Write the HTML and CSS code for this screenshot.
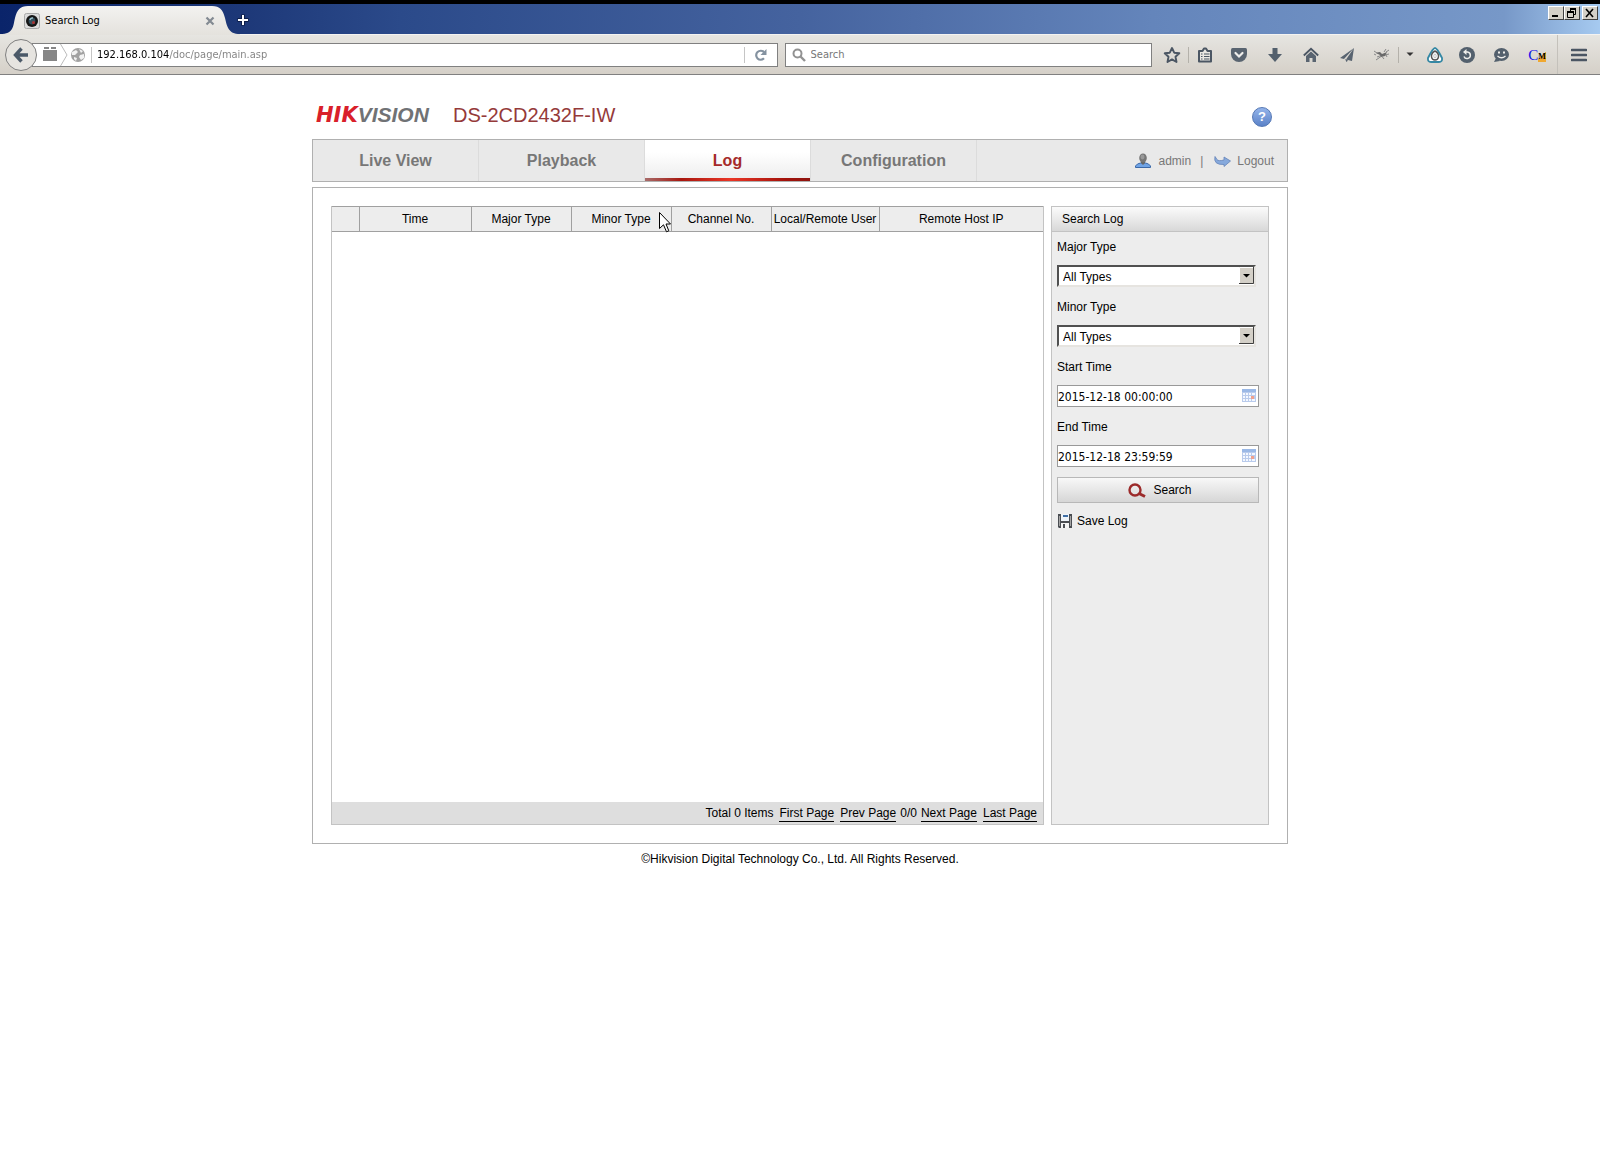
FILE: index.html
```html
<!DOCTYPE html>
<html lang="en">
<head>
<meta charset="utf-8">
<title>Search Log</title>
<link rel="stylesheet" href="styles.css">
</head>
<body>
<div class="browser">
  <div class="titlebar">
    <div class="tab">
      <svg class="tab-shape" width="242" height="29" viewBox="0 0 242 29" aria-hidden="true">
        <defs><linearGradient id="tabFill" x1="0" y1="0" x2="0" y2="1"><stop offset="0" stop-color="#f3f2f0"/><stop offset="1" stop-color="#e4e2dd"/></linearGradient></defs>
        <path d="M0 28C14 28 13 20 15 12C17 4 20 0 28 0H212C220 0 223 4 225 12C227 20 228 28 240 28V29H0Z" fill="url(#tabFill)"/>
      </svg>
      <svg class="favicon" width="16" height="16" viewBox="0 0 16 16" aria-hidden="true">
        <rect x=".5" y=".5" width="15" height="15" rx="2" fill="#dcdcdc" stroke="#a9a9a9"/>
        <circle cx="8" cy="8" r="6" fill="#151515"/><circle cx="8" cy="8" r="3.4" fill="#34505e"/><path d="M6 7a2.500 2.500 0 0 1 3-2" stroke="#9fc3cc" stroke-width="1.500" fill="none"/><circle cx="9.500" cy="9.500" r="1.500" fill="#a33"/>
      </svg>
      <span class="tab-title">Search Log</span>
      <button class="tab-close" aria-label="Close tab"><svg width="10" height="10" viewBox="0 0 10 10"><path d="M1.500 1.500L8.500 8.500M8.500 1.500L1.500 8.500" stroke="#838a92" stroke-width="2.200"/></svg></button>
    </div>
    <button class="new-tab" aria-label="New tab"><svg width="12" height="12" viewBox="0 0 12 12"><path d="M6 .5V11.500M.5 6H11.500" stroke="#0d1d48" stroke-width="4"/><path d="M6 1V11M1 6H11" stroke="#fff" stroke-width="2"/></svg></button>
    <div class="window-buttons">
      <button class="win" aria-label="Minimize"><svg width="12" height="10" viewBox="0 0 12 10"><path d="M2 8H8" stroke="#000" stroke-width="2"/></svg></button>
      <button class="win" aria-label="Restore"><svg width="12" height="10" viewBox="0 0 12 10"><path d="M4 1H10M1 4H8" stroke="#000" stroke-width="2"/><path d="M4.500 1V4M9.500 1V6.500H8M1.500 4V9.500H7.500V4" stroke="#000" fill="none"/></svg></button>
      <button class="win win-close" aria-label="Close"><svg width="12" height="10" viewBox="0 0 12 10"><path d="M2 1L9 9M9 1L2 9" stroke="#000" stroke-width="1.600"/></svg></button>
    </div>
  </div>

  <div class="toolbar">
    <button class="back" aria-label="Back"><svg width="16" height="16" viewBox="0 0 16 16"><path d="M8.500 1.500L2.500 8L8.500 14.500M3 8H15" stroke="#4b5968" stroke-width="3.400" fill="none"/></svg></button>
    <div class="urlbar">
      <svg class="identity" width="54" height="22" viewBox="0 0 54 22" aria-hidden="true">
        <path d="M5 6H19V17H5ZM6 3H11V5H6ZM13 3H18V5H13Z" fill="#868686"/>
        <path d="M22.500 0L29 11L22.500 22" stroke="#bbb" fill="none"/>
        <circle cx="40" cy="11" r="7" fill="#a2a2a2"/><path d="M34 8L38 6L40 8L37 11L34 11ZM41 5L45 7L43 9ZM42 11L46 10V14L43 16L41 13ZM36 13L39 14L38 17L36 15Z" fill="#f2f2f2"/>
        <path d="M53.500 3V19" stroke="#c5c5c5"/>
      </svg>
      <input class="url" type="text" aria-label="Address" value="192.168.0.104/doc/page/main.asp">
      <button class="reload" aria-label="Reload"><svg width="14" height="14" viewBox="0 0 14 14"><path d="M10 10.300A4.500 4.500 0 1 1 10 4.200" stroke="#8492a0" stroke-width="2.200" fill="none"/><path d="M12.500 1V7H6.500Z" fill="#8492a0"/></svg></button>
    </div>
    <div class="searchbar">
      <svg width="14" height="14" viewBox="0 0 14 14" aria-hidden="true"><circle cx="5.500" cy="5.500" r="4" stroke="#929292" stroke-width="2" fill="none"/><path d="M8.500 8.500L13 13" stroke="#929292" stroke-width="2.400"/></svg>
      <input class="search-text" type="text" aria-label="Web search" placeholder="Search">
    </div>
    <div class="tools">
      <button class="tool narrow" aria-label="Bookmark"><svg width="18" height="18" viewBox="0 0 18 18"><path d="M9 2L11.200 6.700L16.300 7.300L12.500 10.800L13.500 16L9 13.400L4.500 16L5.500 10.800L1.700 7.300L6.800 6.700Z" fill="none" stroke="#4b5663" stroke-width="1.900" stroke-linejoin="round"/></svg></button>
      <button class="tool narrow divided" aria-label="Reading list"><svg width="16" height="16" viewBox="0 0 16 16"><path d="M2 4H5.500L7 1.500H9L10.500 4H14V14.500H2Z" fill="#e9e7e3" stroke="#4b5663" stroke-width="2" stroke-linejoin="round"/><path d="M4 7H5.500M7 7H12.500M4 9.500H5.500M7 9.500H12.500M4 12H5.500M7 12H12.500" stroke="#4b5663" stroke-width="1.200"/></svg></button>
      <button class="tool" aria-label="Pocket"><svg width="16" height="16" viewBox="0 0 16 16"><path d="M1.500 1H14.500Q16 1 16 3V7A8 8 0 0 1 0 7V3Q0 1 1.500 1Z" fill="#596470"/><path d="M4.500 6L8 9.500L11.500 6" stroke="#efeeeb" stroke-width="2.200" fill="none" stroke-linecap="round"/></svg></button>
      <button class="tool" aria-label="Downloads"><svg width="16" height="16" viewBox="0 0 16 16"><path d="M5.500 1H10.500V7H15L8 15L1 7H5.500Z" fill="#53606d"/></svg></button>
      <button class="tool" aria-label="Home"><svg width="16" height="16" viewBox="0 0 16 16"><path d="M.8 8.500L8 1.800L15.200 8.500" fill="none" stroke="#4b5663" stroke-width="1.800"/><path d="M3 9L8 4.500L13 9V15H9.500V11H6.500V15H3Z" fill="#596470"/></svg></button>
      <button class="tool" aria-label="Share"><svg width="16" height="16" viewBox="0 0 16 16"><path d="M15 1L1 11L5 12ZM15 1L7 12.500L13 14ZM6 12L7.500 15L9 13.400Z" fill="#596470"/></svg></button>
      <button class="tool narrow" aria-label="Add-on"><svg width="18" height="14" viewBox="0 0 18 14"><path d="M1 3L4 5L7 5M1 6L3 7M11 4L13 1M13 4L16 2M4 9L8 7.500L12 7L16 6M3 12L8 8.500M9 8.500L11 11M13 7L14 9" stroke="#888" fill="none"/><path d="M3 5L7 4L9 6L14 4L12 8L8 9L7 7Z" fill="#6a6a6a"/></svg></button>
      <button class="tool caret divided" aria-label="Add-on menu"><svg width="8" height="5" viewBox="0 0 8 5"><path d="M.5 .5H7.500L4 4Z" fill="#333"/></svg></button>
      <button class="tool slim" aria-label="Privacy"><svg width="16" height="16" viewBox="0 0 16 16"><path d="M8 1Q10 1 15 11Q15.500 15 12 15H4Q.5 15 1 11Q6 1 8 1Z" fill="#fff" stroke="#3588a4" stroke-width="1.800"/><path d="M8 4Q12 6 11.500 10Q11 13 8 13Q5 13 4.500 10Q4 6 8 4Z" fill="#fff" stroke="#555" stroke-width="1.500"/><ellipse cx="8" cy="9" rx="1.200" ry="2" fill="#fff" stroke="#999" stroke-width=".6"/></svg></button>
      <button class="tool narrow" aria-label="Restore session"><svg width="16" height="16" viewBox="0 0 16 16"><circle cx="8" cy="8" r="8" fill="#53606d"/><path d="M6.500 5H8.500A3.300 3.300 0 1 1 5 9.500" fill="none" stroke="#efeeeb" stroke-width="1.500"/><path d="M7.500 2L4 5L7.500 8Z" fill="#efeeeb"/></svg></button>
      <button class="tool" aria-label="Chat"><svg width="16" height="16" viewBox="0 0 16 16"><ellipse cx="8.500" cy="7.500" rx="7.500" ry="6.500" fill="#53606d"/><path d="M3 11L1 15L7 14Z" fill="#53606d"/><path d="M5 5.500H7M10 5.500H12" stroke="#efeeeb" stroke-width="2"/><path d="M4.500 9Q8.500 12.500 12.500 9" stroke="#efeeeb" stroke-width="1.300" fill="none"/></svg></button>
      <button class="tool cm" aria-label="CM add-on"><span class="cm-c">C</span><span class="cm-m">M</span></button>
      <button class="tool menu" aria-label="Menu"><svg width="16" height="14" viewBox="0 0 16 14"><path d="M1 2H15M1 7H15M1 12H15" stroke="#4b5663" stroke-width="2.600" stroke-linecap="round"/></svg></button>
    </div>
  </div>
</div>

<div class="page">
  <header class="brand">
    <div class="logo"><span class="logo-hik">HIK</span><span class="logo-vision">VISION</span></div>
    <h1 class="model">DS-2CD2432F-IW</h1>
    <button class="help" aria-label="Help">?</button>
  </header>

  <nav class="nav">
    <a class="nav-item" href="#live">Live View</a>
    <a class="nav-item" href="#playback">Playback</a>
    <a class="nav-item active" href="#log">Log</a>
    <a class="nav-item" href="#config">Configuration</a>
    <div class="account">
      <svg width="16" height="16" viewBox="0 0 16 16" aria-hidden="true"><path d="M.5 14.500V13Q2 10.500 5.500 10H10.500Q14 10.500 15.500 13V14.500Z" fill="#70a4e6" stroke="#3a68a8"/><path d="M6 8H10V10L8 12L6 10Z" fill="#666"/><ellipse cx="8" cy="5" rx="3.800" ry="4.600" fill="#777"/><ellipse cx="7.500" cy="4" rx="2" ry="2.400" fill="#999"/></svg>
      <span class="user">admin</span>
      <span class="bar">|</span>
      <svg width="17" height="12" viewBox="0 0 17 12" aria-hidden="true"><path d="M1 1.500Q-1 10 10 9.500V11.500L16.500 6L10 2V5Q4 6.500 3 4.500Z" fill="#86a9dc" stroke="#6483b8" stroke-width=".8"/></svg>
      <a class="logout" href="#logout">Logout</a>
    </div>
  </nav>

  <main class="panel">
    <section class="log">
      <table class="grid">
        <colgroup><col class="c-index"><col class="c-time"><col class="c-type"><col class="c-type"><col class="c-type"><col class="c-user"><col></colgroup>
        <thead><tr><th></th><th>Time</th><th>Major Type</th><th>Minor Type</th><th>Channel No.</th><th>Local/Remote User</th><th>Remote Host IP</th></tr></thead>
      </table>
      <div class="pager">
        <span class="total">Total 0 Items</span>
        <a href="#first">First Page</a>
        <a class="prev" href="#prev">Prev Page</a>
        <span>0/0</span>
        <a class="next" href="#next">Next Page</a>
        <a href="#last">Last Page</a>
      </div>
      <svg class="pointer" width="12" height="21" viewBox="0 0 12 21" aria-hidden="true"><path d="M.5 .5V16.500L4.500 12.800L7.500 19.800L9.800 18.800L7 12H11.500Z" fill="#fff" stroke="#000"/></svg>
    </section>

    <aside class="side">
      <h2 class="side-title">Search Log</h2>
      <form class="form">
        <label for="major">Major Type</label>
        <div class="select"><select id="major"><option>All Types</option></select><svg width="15" height="17" viewBox="0 0 15 17" aria-hidden="true"><rect width="15" height="17" fill="#d4d0c8"/><path d="M.5 16V.5H14" stroke="#fff" fill="none"/><path d="M0 16.500H14.500V0" stroke="#404040" fill="none"/><path d="M4 7H11L7.500 10.500Z"/></svg></div>
        <label for="minor">Minor Type</label>
        <div class="select"><select id="minor"><option>All Types</option></select><svg width="15" height="17" viewBox="0 0 15 17" aria-hidden="true"><rect width="15" height="17" fill="#d4d0c8"/><path d="M.5 16V.5H14" stroke="#fff" fill="none"/><path d="M0 16.500H14.500V0" stroke="#404040" fill="none"/><path d="M4 7H11L7.500 10.500Z"/></svg></div>
        <label for="start">Start Time</label>
        <div class="date"><input id="start" type="text" value="2015-12-18 00:00:00"><svg width="14" height="13" viewBox="0 0 14 13" aria-hidden="true"><rect width="14" height="13" fill="#b9cbec"/><rect width="14" height="3" fill="#9ab8e6"/><path d="M1 4H3V6H1ZM4 4H6V6H4ZM7 4H9V6H7ZM10 4H13V6H10ZM1 7H3V9H1ZM4 7H6V9H4ZM7 7H9V9H7ZM1 10H3V12H1ZM4 10H6V12H4ZM7 10H9V12H7ZM10 10H13V12H10Z" fill="#f4f8ff"/><rect x="9" y="7" width="3" height="3" fill="#f0a18c"/></svg></div>
        <label for="end">End Time</label>
        <div class="date"><input id="end" type="text" value="2015-12-18 23:59:59"><svg width="14" height="13" viewBox="0 0 14 13" aria-hidden="true"><rect width="14" height="13" fill="#b9cbec"/><rect width="14" height="3" fill="#9ab8e6"/><path d="M1 4H3V6H1ZM4 4H6V6H4ZM7 4H9V6H7ZM10 4H13V6H10ZM1 7H3V9H1ZM4 7H6V9H4ZM7 7H9V9H7ZM1 10H3V12H1ZM4 10H6V12H4ZM7 10H9V12H7ZM10 10H13V12H10Z" fill="#f4f8ff"/><rect x="9" y="7" width="3" height="3" fill="#f0a18c"/></svg></div>
        <button class="search" type="button"><svg width="18" height="15" viewBox="0 0 18 15" aria-hidden="true"><circle cx="7" cy="7" r="5.500" fill="none" stroke="#9c2b2b" stroke-width="2.400"/><path d="M11 10.500L17 13.500" stroke="#9c2b2b" stroke-width="3"/></svg>Search</button>
        <button class="save" type="button"><svg width="14" height="14" viewBox="0 0 14 14" aria-hidden="true"><path d="M0 0H14V14H1L0 13Z" fill="#4a4d52"/><path d="M3 0H11V7H3Z" fill="#eef3f8"/><path d="M5 1H10V3H5Z" fill="#3f6ea5"/><path d="M3 9H11V14H3Z" fill="#f4f4f4"/><path d="M5 10H7V14H5Z" fill="#4a4d52"/><path d="M1.500 2V12M12.500 2V12" stroke="#a4a4a4"/></svg>Save Log</button>
      </form>
    </aside>
  </main>
  <footer class="footer">©Hikvision Digital Technology Co., Ltd. All Rights Reserved.</footer>
</div>
</body>
</html>
```
FILE: styles.css
```css
* { box-sizing: border-box; }
body {
  margin: 0;
  background: #fff;
  color: #000;
  font: 12px/16px "Liberation Sans", Arial, sans-serif;
}
button {
  display: flex;
  align-items: center;
  justify-content: center;
  padding: 0;
  border: 0;
  background: none;
  color: inherit;
  font: inherit;
}
input, select { font: inherit; color: inherit; }
a { color: inherit; text-decoration: none; }
svg { flex: none; }

/* Browser window */
.browser { font: 11px/14px "DejaVu Sans Condensed", Tahoma, sans-serif; }
.titlebar {
  display: flex;
  height: 34px;
  border-top: 4px solid #000;
  background: linear-gradient(90deg, #0a246a, #1d3878 15%, #2b4a8a 25%, #45639f 50%, #6485bb 72%, #7798c8 94%, #a6caf0);
}
.tab {
  position: relative;
  display: flex;
  align-items: center;
  width: 228px;
  padding: 4px 12px 0 24px;
}
.tab-shape { position: absolute; left: 0; top: 2px; }
.favicon, .tab-title, .tab-close { position: relative; }
.tab-title { flex: 1; padding-left: 5px; }
.tab-close { width: 12px; height: 16px; }
.new-tab { width: 30px; padding-top: 2px; }
.window-buttons { display: flex; margin-left: auto; padding: 2px 2px 0 0; }
.win {
  width: 16px;
  height: 14px;
  border: 1px solid;
  border-color: #fff #404040 #404040 #fff;
  background: #d4d0c8;
}
.win-close { margin-left: 2px; }
.toolbar {
  display: flex;
  align-items: center;
  height: 41px;
  border-top: 1px solid #f4f3f1;
  border-bottom: 1px solid #808080;
  background: linear-gradient(#e6e5e1, #d5d0c8);
  padding-left: 5px;
}
.back {
  position: relative;
  flex: none;
  width: 32px;
  height: 32px;
  border: 1px solid #808080;
  border-radius: 50%;
  background: #e6e4e0;
}
.urlbar, .searchbar {
  display: flex;
  align-items: center;
  height: 24px;
  border: 1px solid #808080;
  background: #fff;
}
.urlbar { flex: 748; margin-left: -5px; padding-left: 5px; }
.searchbar { flex: 364; margin-left: 7px; padding-left: 6px; }
.url, .search-text {
  flex: 1;
  min-width: 0;
  border: 0;
  padding: 0 0 0 5px;
  outline: 0;
  background: none;
}
.url {
  color: transparent;
  background: linear-gradient(90deg, #000 77px, #808080 77px);
  background-clip: text;
}
.search-text::placeholder { color: #777; opacity: 1; }
.reload { width: 33px; height: 16px; border-left: 1px solid #c5c5c5; }
.tools { display: flex; align-items: center; margin-left: 3px; }
.tool { width: 36px; height: 16px; }
.narrow { width: 33px; }
.slim { width: 30px; }
.divided { border-left: 1px solid #b4b1aa; }
.caret { width: 22px; }
.menu { width: 43px; height: 39px; margin-left: 2px; border-left: 1px solid #c4c1bb; }
.cm { font: 15px/16px "Liberation Serif", serif; }
.cm-c { color: #1010e8; }
.cm-m {
  margin-top: 4px;
  background: linear-gradient(135deg, transparent 40%, #f0a830 40%);
  font-size: 8px;
  font-weight: bold;
  line-height: 10px;
}

/* Camera page */
.page { width: 61%; min-width: 976px; margin: 0 auto; }
.brand { display: flex; align-items: center; height: 64px; padding: 16px 16px 0 4px; }
.logo { display: flex; width: 137px; font-size: 21px; font-style: italic; font-weight: bold; line-height: 24px; }
.logo-hik { color: #d9202a; font-family: "DejaVu Sans", sans-serif; }
.logo-vision { color: #707275; }
.model { margin: 0; color: #953a3a; font-size: 20px; font-weight: normal; line-height: 24px; }
.help {
  width: 20px;
  height: 20px;
  margin: 4px 0 0 auto;
  border: 1px solid #5578b4;
  border-radius: 50%;
  background: linear-gradient(#94b4ea, #5b82c8);
  color: #fff;
  font-size: 13px;
  font-weight: bold;
}
.nav { display: flex; height: 43px; border: 1px solid #b0b0b0; background: #e9e9e9; }
.nav-item {
  width: 166px;
  border-right: 1px solid #dcdcdc;
  color: #777;
  font-size: 16px;
  font-weight: bold;
  line-height: 41px;
  text-align: center;
}
.nav-item.active {
  color: #a52a2a;
  background:
    linear-gradient(90deg, #a86c6a, #a8170f 22%, #ea3626 52%, #a3120b 85%, #8f1510) bottom / 100% 3px no-repeat,
    linear-gradient(#fff 30%, #ececec);
}
.account { display: flex; align-items: center; margin-left: auto; padding-right: 13px; color: #777; }
.user { padding-left: 7px; }
.bar { padding: 0 11px 0 9px; }
.logout { padding-left: 6px; }

.panel {
  display: flex;
  gap: 7px;
  min-height: 657px;
  margin-top: 5px;
  padding: 18px;
  border: 1px solid #b0b0b0;
}
.log { position: relative; display: flex; flex: 1; flex-direction: column; border: 1px solid #c3c3c3; border-top: 0; }
.grid { width: 100%; table-layout: fixed; border-collapse: collapse; }
.grid th {
  height: 25px;
  padding: 0;
  border: solid #a0a0a0;
  border-width: 1px 0 1px 1px;
  background: #ededed;
  font-weight: normal;
  line-height: 14px;
  white-space: nowrap;
}
.grid th:first-child { border-left: 0; }
.c-index { width: 27px; }
.c-time { width: 112px; }
.c-type { width: 100px; }
.c-user { width: 108px; }
.pager {
  display: flex;
  align-items: center;
  justify-content: flex-end;
  gap: 6px;
  height: 22px;
  margin-top: auto;
  padding-right: 6px;
  background: #dedede;
}
.pager a { padding-top: 1px; border-bottom: 1px solid #000; line-height: 15px; }
.prev { margin-right: -2px; }
.next { margin-left: -2px; }
.pointer { position: absolute; left: 327px; top: 6px; }

.side { width: 218px; border: 1px solid #c3c3c3; background: #ededed; }
.side-title {
  height: 25px;
  margin: 0;
  padding-left: 10px;
  border-bottom: 1px solid #c3c3c3;
  background: linear-gradient(#fbfbfb, #d8d8d8);
  font-size: 12px;
  font-weight: normal;
  line-height: 24px;
}
.form { display: flex; flex-direction: column; padding: 0 9px 0 5px; }
.form label { height: 30px; line-height: 30px; }
.select, .date { position: relative; height: 22px; margin: 3px 0 5px; }
.select select {
  appearance: none;
  width: 199px;
  height: 22px;
  padding: 1px 20px 0 4px;
  border: 2px solid;
  border-color: #505050 #e6e4e0 #e6e4e0 #505050;
  border-radius: 0;
  background: #fff;
}
.select svg { position: absolute; left: 182px; top: 2px; }
.date input {
  width: 100%;
  height: 22px;
  padding: 2px 0 0;
  border: 1px solid #999;
  font-family: "DejaVu Sans Condensed", Tahoma, sans-serif;
}
.date svg { position: absolute; right: 3px; top: 4px; }
.search {
  gap: 7px;
  height: 26px;
  margin-top: 5px;
  padding-left: 4px;
  border: 1px solid #b8b8b8;
  background: linear-gradient(#f8f8f8, #d6d6d6);
}
.save { align-self: flex-start; gap: 5px; height: 16px; margin: 10px 0 0 1px; }
.footer { padding-top: 7px; text-align: center; }
```
